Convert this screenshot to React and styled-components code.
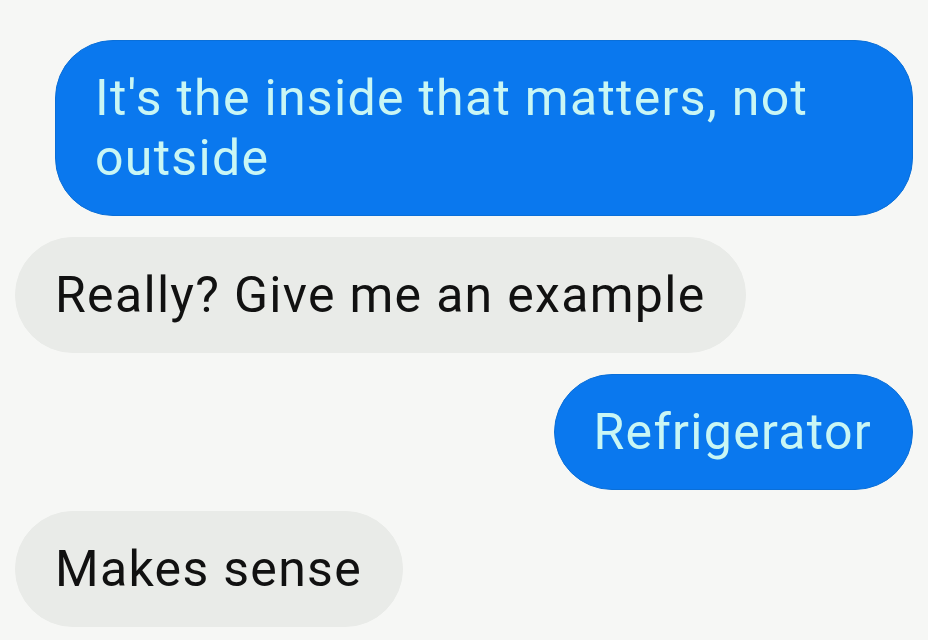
import React from "react";
import styled, { createGlobalStyle } from "styled-components";

const GlobalStyle = createGlobalStyle`
  html, body {
    margin: 0;
    padding: 0;
    background: #f6f7f5;
  }
`;

const messages = [
  { id: 1, mine: true, text: "It's the inside that matters, not outside" },
  { id: 2, mine: false, text: "Really? Give me an example" },
  { id: 3, mine: true, text: "Refrigerator" },
  { id: 4, mine: false, text: "Makes sense" },
];

export default function App() {
  return (
    <>
      <GlobalStyle />
      <Thread>
        {messages.map((m) => (
          <Row key={m.id} $mine={m.mine}>
            <Bubble $mine={m.mine}>{m.text}</Bubble>
          </Row>
        ))}
      </Thread>
    </>
  );
}

const Thread = styled.div`
  width: 928px;
  height: 640px;
  box-sizing: border-box;
  padding: 40px 15px 0 15px;
  display: flex;
  flex-direction: column;
  gap: 21px;
  background: #f6f7f5;
  font-family: Roboto, "Liberation Sans", sans-serif;
`;

const Row = styled.div`
  display: flex;
  justify-content: ${(p) => (p.$mine ? "flex-end" : "flex-start")};
`;

const Bubble = styled.div`
  box-sizing: border-box;
  max-width: 858px;
  padding: 27px 40px 27px 39px;
  border-radius: 58px;
  font-size: 50px;
  letter-spacing: 1.3px;
  line-height: 60px;
  background: ${(p) => (p.$mine ? "#0a78ee" : "#e9ebe8")};
  color: ${(p) => (p.$mine ? "#c9f6f4" : "#111111")};
  border: 1px solid ${(p) => (p.$mine ? "#0a6fd8" : "#e9ebe8")};
`;
